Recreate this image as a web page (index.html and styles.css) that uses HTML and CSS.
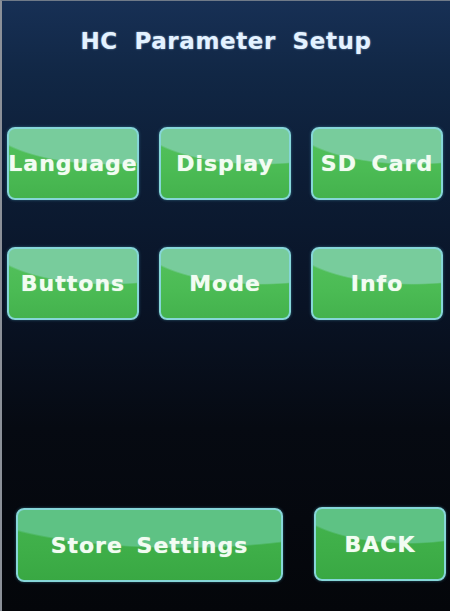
FILE: index.html
```html
<!DOCTYPE html>
<html>
<head>
<meta charset="utf-8">
<title>HC Parameter Setup</title>
<link rel="stylesheet" href="styles.css">
</head>
<body>
<div class="screen">
  <h1 class="title">HC Parameter Setup</h1>
  <div class="grid">
    <div class="btn">Language</div>
    <div class="btn">Display</div>
    <div class="btn">SD Card</div>
    <div class="btn">Buttons</div>
    <div class="btn">Mode</div>
    <div class="btn">Info</div>
  </div>
  <div class="bottom">
    <div class="btn btn-store">Store Settings</div>
    <div class="btn btn-back">BACK</div>
  </div>
</div>
</body>
</html>
```

FILE: styles.css
```css
* { box-sizing: border-box; }
html, body {
  margin: 0;
  padding: 0;
  width: 450px;
  height: 611px;
  background: #05070b;
  overflow: hidden;
}
.screen {
  width: 450px;
  height: 611px;
  border-left: 2px solid #8b9098;
  border-top: 1px solid #6f7a88;
  background: linear-gradient(180deg, #173055 0%, #112745 12%, #0c1c34 30%, #091325 50%, #060a12 70%, #04060a 100%);
  display: flex;
  flex-direction: column;
  font-family: "DejaVu Sans", Verdana, sans-serif;
  font-weight: bold;
}
.title {
  margin: 26px 0 0 0;
  font-size: 23px;
  line-height: 28px;
  font-weight: bold;
  text-align: center;
  letter-spacing: 0.6px;
  word-spacing: 8px;
  color: #e4f2ff;
  text-shadow: 0 0 2px rgba(190, 225, 255, 0.7);
}
.grid {
  margin: 72px 0 0 5px;
  display: grid;
  grid-template-columns: 132px 132px 132px;
  grid-auto-rows: 73px;
  column-gap: 20px;
  row-gap: 47px;
}
.btn {
  display: flex;
  align-items: center;
  justify-content: center;
  border: 2px solid #86d6d8;
  border-radius: 8px;
  background:
    radial-gradient(ellipse 100% 70% at 78% -18%, #78cc9c 0 97%, rgba(120, 204, 156, 0) 100%),
    linear-gradient(180deg, #55c25e 0%, #4bbb54 60%, #44b24d 100%);
  box-shadow: 0 0 3px rgba(80, 170, 200, 0.5);
  color: #f2fcf2;
  font-size: 22px;
  letter-spacing: 1px;
  word-spacing: 6px;
  text-shadow: 0 0 1px rgba(255, 255, 255, 0.6);
  white-space: nowrap;
}
.bottom {
  margin-top: auto;
  margin-bottom: 29px;
  display: flex;
  align-items: center;
  padding-left: 14px;
}
.btn-store {
  width: 267px;
  height: 74px;
  word-spacing: 5px;
  background:
    radial-gradient(ellipse 85% 75% at 62% -20%, #5ec284 0 97%, rgba(94, 194, 132, 0) 100%),
    linear-gradient(180deg, #44b44f 0%, #3eae48 60%, #39a843 100%);
}
.btn-back {
  width: 132px;
  height: 74px;
  margin-left: 31px;
  margin-top: -2px;
  background:
    radial-gradient(ellipse 95% 70% at 72% -20%, #5ec284 0 97%, rgba(94, 194, 132, 0) 100%),
    linear-gradient(180deg, #44b44f 0%, #3eae48 60%, #39a843 100%);
}
```
